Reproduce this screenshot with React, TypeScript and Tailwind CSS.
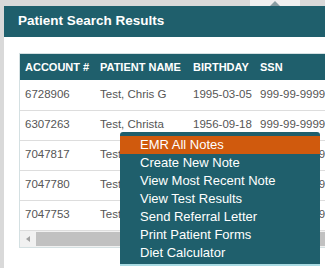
import React from 'react';

const rows = [
  { account: '6728906', name: 'Test, Chris G', birthday: '1995-03-05', ssn: '999-99-9999' },
  { account: '6307263', name: 'Test, Christa', birthday: '1956-09-18', ssn: '999-99-9999' },
  { account: '7047817', name: 'Test, Amy', birthday: '1980-01-01', ssn: '999-99-9999' },
  { account: '7047780', name: 'Test, Bob', birthday: '1980-01-01', ssn: '999-99-9999' },
  { account: '7047753', name: 'Test, Carl', birthday: '1980-01-01', ssn: '999-99-9999' },
];

const menuItems = [
  'EMR All Notes',
  'Create New Note',
  'View Most Recent Note',
  'View Test Results',
  'Send Referral Letter',
  'Print Patient Forms',
  'Diet Calculator',
];

export default function App() {
  return (
    <div
      className="relative w-[325px] h-[268px] overflow-hidden bg-[#d9d9d9]"
      style={{ fontFamily: '"Liberation Sans", Arial, sans-serif' }}
    >
      {/* top tab */}
      <div className="absolute left-[250px] top-0 w-[50px] h-[6px] bg-[#f0f0f0] flex justify-center">
        <div className="w-0 h-0 border-l-[5px] border-r-[5px] border-b-[5px] border-l-transparent border-r-transparent border-b-[#8a9ea3] mt-[1px]" />
      </div>

      <div className="ml-[4px] pt-[6px] h-full">
        <div className="bg-white h-full">
          <div className="h-[31px] bg-[#1f5f6c] flex items-center pl-[14px]">
            <h2 className="text-white font-bold text-[13.5px]">Patient Search Results</h2>
          </div>

          <div className="pl-[15px] pt-[16px]">
            <div className="border border-[#d4e0e2] border-r-0 w-[340px]">
              <table className="w-full border-collapse text-left">
                <thead>
                  <tr className="bg-[#1f5f6c] text-white h-[26px]">
                    <th className="font-bold text-[11px] pl-[5px] w-[80px]">ACCOUNT #</th>
                    <th className="font-bold text-[11px] w-[93px]">PATIENT NAME</th>
                    <th className="font-bold text-[11px] w-[67px]">BIRTHDAY</th>
                    <th className="font-bold text-[11px]">SSN</th>
                  </tr>
                </thead>
                <tbody>
                  {rows.map((r) => (
                    <tr key={r.account} className="h-[30px] border-b border-[#dddddd] text-[#555555] text-[11.5px]">
                      <td className="pl-[5px]">{r.account}</td>
                      <td>{r.name}</td>
                      <td>{r.birthday}</td>
                      <td>{r.ssn}</td>
                    </tr>
                  ))}
                </tbody>
              </table>
              {/* horizontal scrollbar */}
              <div className="h-[16px] bg-[#f1f1f1] flex items-center">
                <div className="w-[16px] h-full flex items-center justify-center">
                  <div className="w-0 h-0 border-t-[3px] border-b-[3px] border-r-[4px] border-t-transparent border-b-transparent border-r-[#a3a3a3]" />
                </div>
                <div className="flex-1 h-[14px] bg-[#c1c1c1]" />
              </div>
            </div>
          </div>
        </div>
      </div>

      {/* context menu */}
      <div className="absolute left-[120px] top-[132px] w-[200px] bg-[#1f5f6c] rounded-t-[3px] pt-[4px] pb-[2px] border-b-2 border-[#a9dbe3]">
        {menuItems.map((item, i) => (
          <div
            key={item}
            className={`h-[18px] leading-[18px] pl-[20px] text-[13px] text-white ${i === 0 ? 'bg-[#d05a0d]' : ''}`}
          >
            {item}
          </div>
        ))}
      </div>
    </div>
  );
}
